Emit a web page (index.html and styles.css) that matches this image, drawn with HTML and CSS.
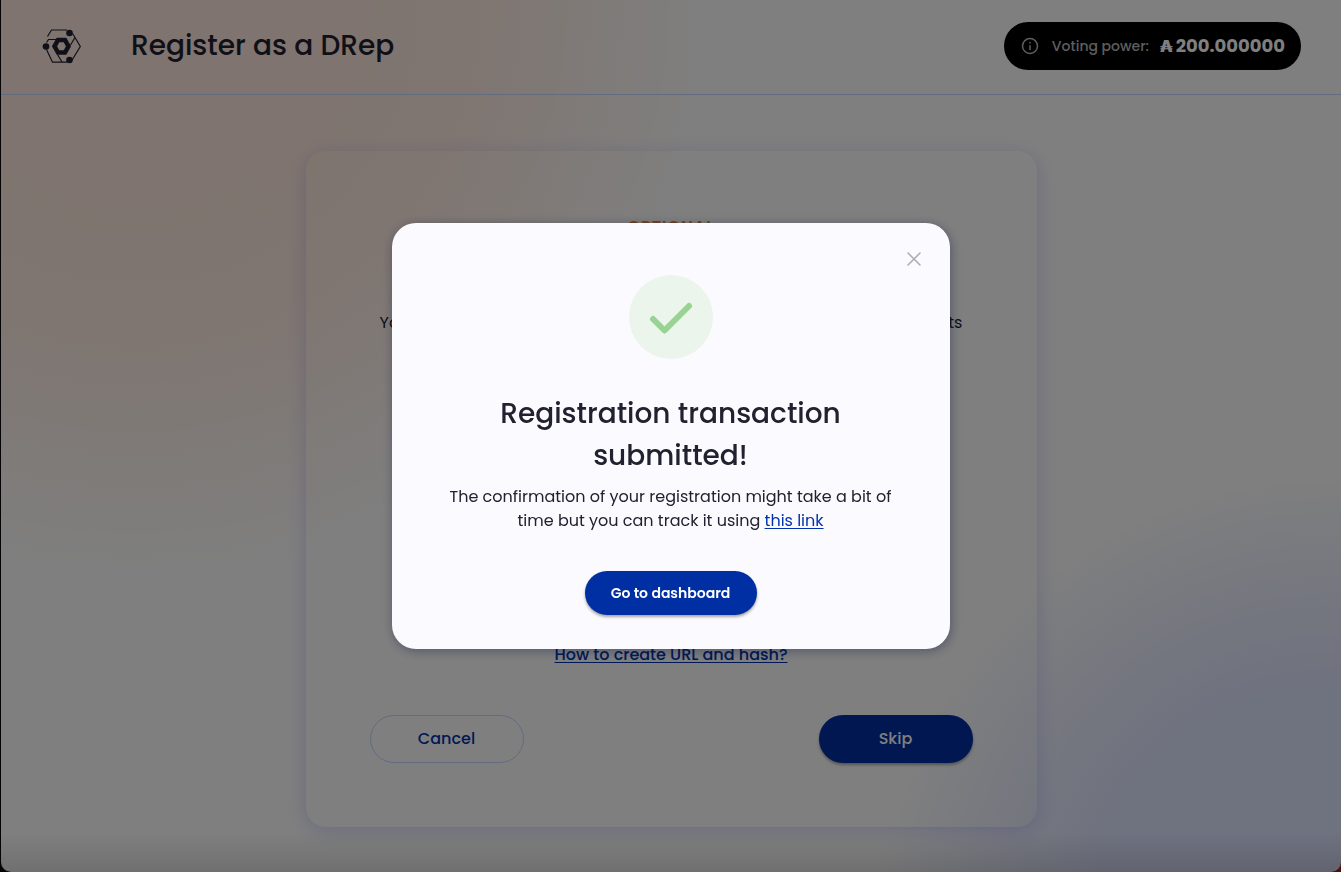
FILE: index.html
```html
<!DOCTYPE html>
<html lang="en">
<head>
<meta charset="utf-8">
<meta name="viewport" content="width=device-width, initial-scale=1">
<title>Register as a DRep</title>
<link rel="stylesheet" href="styles.css">
</head>
<body>
<div class="page">
  <header class="topbar">
    <svg class="logo" viewBox="0 0 40 36" aria-hidden="true">
      <g fill="none" stroke="currentColor" stroke-width="1.2">
        <path d="M5.500 8.500 9.500 2H25M30.500 5.500L33 9.500 28.500 17M33 9.500L38.300 18.500 29.500 33"/>
        <path d="M4.500 14.500 6.500 11.500H15M4.500 21.500 10.500 34.200H25M15.500 26.500 20 34"/>
      </g>
      <path fill="none" stroke="currentColor" stroke-width="4.500" d="M16 12H23L26.500 18.300 23 24.500H16L12.500 18.300Z"/>
      <circle cx="27.500" cy="5" r="3.300"/><circle cx="4" cy="18.500" r="3.300"/><circle cx="27.500" cy="32" r="3.300"/>
    </svg>
    <h1 class="title">Register as a DRep</h1>
    <div class="power">
      <svg class="info" viewBox="0 0 18 18" aria-hidden="true"><circle cx="9" cy="9" r="7.500"/><path d="M9 8.200V13M9 5V6.500"/></svg>
      <span class="power-label">Voting power:</span>
      <strong class="power-value"><span class="ada">₳</span>200.000000</strong>
    </div>
  </header>
  <main class="content">
    <form class="card">
      <p class="optional">OPTIONAL</p>
      <h2 class="card-title">Add Information</h2>
      <p class="card-text">You can include extra information about yourself and your commitments</p>
      <div class="fields">
        <input class="field" type="url" aria-label="URL">
        <input class="field" type="text" aria-label="Hash">
      </div>
      <a class="link help" href="#">How to create URL and hash?</a>
      <div class="actions">
        <button class="button outlined" type="button">Cancel</button>
        <button class="button filled" type="button">Skip</button>
      </div>
    </form>
  </main>
</div>
<div class="overlay">
  <section class="modal" role="dialog" aria-modal="true" aria-labelledby="modal-title">
    <button class="close" type="button" aria-label="Close"><svg viewBox="0 0 24 24" aria-hidden="true"><path d="M6 6 18 18M18 6 6 18"/></svg></button>
    <svg class="success" viewBox="0 0 84 84" aria-hidden="true"><circle cx="42" cy="42" r="42"/><path d="M24 44 35.500 55.500 60 31"/></svg>
    <h2 class="modal-title" id="modal-title">Registration transaction submitted!</h2>
    <p class="modal-text">The confirmation of your registration might take a bit of time but you can track it using <a class="link" href="#">this link</a></p>
    <button class="button filled compact" type="button">Go to dashboard</button>
  </section>
</div>
</body>
</html>
```
FILE: styles.css
```css
* { box-sizing: border-box; }
body {
  margin: 0;
  background: linear-gradient(90deg, #08080c 0 50%, #a02010 50%);
  color: #212130;
  font: 400 16px/24px Poppins, Inter, sans-serif;
}
h1, h2, p { margin: 0; }
button { font: inherit; cursor: pointer; }

.page {
  min-height: 100vh;
  margin-left: 1px;
  display: flex;
  flex-direction: column;
  border-radius: 0 0 10px 10px;
  background:
    linear-gradient(0deg, rgba(0, 0, 0, .12), transparent 40px),
    radial-gradient(circle at 99% 106%, #dee4ff 0 14%, rgba(222, 228, 255, .7) 19%, rgba(222, 228, 255, 0) 28%),
    radial-gradient(circle at 10% 0%, #ffe9de 0 14%, rgba(255, 233, 222, .8) 24%, rgba(255, 233, 222, 0) 39%),
    #fff;
}
.topbar {
  display: flex;
  align-items: center;
  padding: 22px 40px 24px 41px;
  border-bottom: 1px solid #c4d6ff;
}
.logo { width: 40px; height: 36px; color: #212130; fill: currentColor; }
.title { margin-left: 49px; font-size: 28px; line-height: 42px; font-weight: 500; }
.power {
  height: 48px;
  margin-left: auto;
  padding: 0 16px 0 17px;
  display: flex;
  align-items: center;
  border-radius: 24px;
  background: #000;
  color: #fff;
}
.info { width: 18px; height: 18px; margin-right: 13px; fill: none; stroke: #bcbcbc; stroke-width: 1.500; }
.power-label { margin-right: 11px; font-size: 14px; font-weight: 500; color: #bcbcbc; }
.power-value { font-size: 18px; font-weight: 700; }
.ada { margin-right: 3px; font-family: Inter, sans-serif; font-size: 16px; font-weight: 900; }

.content { padding: 56px 16px 45px; }
.card {
  max-width: 731px;
  margin: 0 auto;
  padding: 64px;
  display: flex;
  flex-direction: column;
  align-items: center;
  border-radius: 20px;
  box-shadow: 0 4px 20px rgba(47, 64, 220, .2);
}
.optional { color: #f28033; font-weight: 600; letter-spacing: 1px; }
.card-title { margin-top: 12px; font-size: 28px; line-height: 42px; font-weight: 500; }
.card-text { margin-top: 18px; text-align: center; }
.fields { width: 384px; max-width: 100%; margin: 56px 0 132px; display: grid; gap: 24px; }
.field { height: 48px; padding: 0 16px; border: 1px solid #6f99ff; border-radius: 24px; background: #fff; font: inherit; }
.link { color: #0033ad; text-decoration: underline; text-decoration-thickness: 1px; text-underline-offset: 2px; }
.help { font-weight: 500; }
.actions { width: 100%; margin-top: 48px; display: flex; justify-content: space-between; }
.button { width: 154px; height: 48px; border: 0; border-radius: 24px; font-weight: 500; }
.outlined { border: 1px solid #c4d6ff; background: transparent; color: #0033ad; }
.filled { background: #002ea3; color: #fff; box-shadow: 0 2px 3px rgba(0, 0, 0, .35); }
.compact { width: 172px; height: 44px; font-size: 14px; font-weight: 600; }

.overlay {
  position: fixed;
  inset: 0;
  display: flex;
  align-items: center;
  justify-content: center;
  padding: 16px;
  background: rgba(0, 0, 0, .5);
}
.modal {
  position: relative;
  width: 100%;
  max-width: 558px;
  padding: 52px 48px 34px;
  display: flex;
  flex-direction: column;
  align-items: center;
  border-radius: 24px;
  background: #fbfbff;
  box-shadow: 1px 2px 11px rgba(0, 18, 61, .37);
  text-align: center;
}
.close {
  position: absolute;
  top: 24px;
  right: 24px;
  width: 24px;
  height: 24px;
  padding: 0;
  border: 0;
  background: none;
}
.close svg { display: block; fill: none; stroke: #adaeb4; stroke-width: 1.600; stroke-linecap: round; }
.success { width: 84px; height: 84px; fill: #ebf5eb; }
.success path { fill: none; stroke: #99d393; stroke-width: 6; stroke-linecap: round; stroke-linejoin: round; }
.modal-title { margin-top: 34px; max-width: 400px; font-size: 28px; line-height: 42px; font-weight: 500; }
.modal-text { margin: 8px 0 38px; }
```
